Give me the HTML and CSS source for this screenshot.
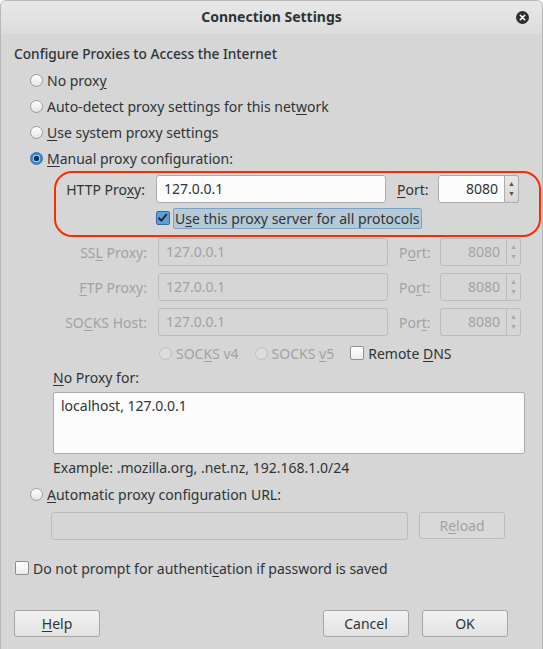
FILE: index.html
```html
<!DOCTYPE html>
<html lang="en">
<head>
    <meta charset="UTF-8">
    <title>Connection Settings</title>
    <link rel="stylesheet" href="styles.css">
</head>
<body>
    <div class="window">
        <div class="titlebar">
            <span class="title">Connection Settings</span>
            <span class="close">
                <svg width="13" height="13" viewBox="0 0 13 13"><circle cx="6.5" cy="6.5" r="6.5" fill="#2e2e2e"/><path d="M4.3 4.3 L8.7 8.7 M8.7 4.3 L4.3 8.7" stroke="#fff" stroke-width="1.6" stroke-linecap="round"/></svg>
            </span>
        </div>

        <div class="content">
            <div class="heading">Configure Proxies to Access the Internet</div>

            <div class="options">
                <div class="option"><span class="radio"></span><span>No prox<u>y</u></span></div>
                <div class="option"><span class="radio"></span><span>Auto-detect proxy settings for this net<u>w</u>ork</span></div>
                <div class="option"><span class="radio"></span><span><u>U</u>se system proxy settings</span></div>
                <div class="option"><span class="radio checked"></span><span><u>M</u>anual proxy configuration:</span></div>
            </div>

            <!-- recuadro rojo alrededor del proxy HTTP -->
            <div class="highlight">
                <div class="proxy-row">
                    <label class="proxy-label">HTTP Pro<u>x</u>y:</label>
                    <div class="field">127.0.0.1</div>
                    <label class="port-label"><u>P</u>ort:</label>
                    <div class="spin">
                        <div class="spin-value">8080</div>
                        <div class="spin-arrows"><span>▲</span><span>▼</span></div>
                    </div>
                </div>
                <div class="share-row">
                    <span class="check checked">
                        <svg width="13" height="13" viewBox="0 0 13 13"><path d="M2.5 6.8 L5.3 9.6 L10.8 3.2" fill="none" stroke="#1d2a36" stroke-width="2"/></svg>
                    </span>
                    <span class="focus-label">U<u>s</u>e this proxy server for all protocols</span>
                </div>
            </div>

            <div class="proxy-rows">
                <div class="proxy-row disabled">
                    <label class="proxy-label">SS<u>L</u> Proxy:</label>
                    <div class="field">127.0.0.1</div>
                    <label class="port-label">P<u>o</u>rt:</label>
                    <div class="spin">
                        <div class="spin-value">8080</div>
                        <div class="spin-arrows"><span>▲</span><span>▼</span></div>
                    </div>
                </div>
                <div class="proxy-row disabled">
                    <label class="proxy-label"><u>F</u>TP Proxy:</label>
                    <div class="field">127.0.0.1</div>
                    <label class="port-label">Po<u>r</u>t:</label>
                    <div class="spin">
                        <div class="spin-value">8080</div>
                        <div class="spin-arrows"><span>▲</span><span>▼</span></div>
                    </div>
                </div>
                <div class="proxy-row disabled">
                    <label class="proxy-label">SO<u>C</u>KS Host:</label>
                    <div class="field">127.0.0.1</div>
                    <label class="port-label">Por<u>t</u>:</label>
                    <div class="spin">
                        <div class="spin-value">8080</div>
                        <div class="spin-arrows"><span>▲</span><span>▼</span></div>
                    </div>
                </div>
                <div class="socks-row">
                    <span class="option disabled"><span class="radio"></span><span>SOC<u>K</u>S v4</span></span>
                    <span class="option disabled"><span class="radio checked-off"></span><span>SOCKS <u>v</u>5</span></span>
                    <span class="option"><span class="check"></span><span>Remote <u>D</u>NS</span></span>
                </div>
            </div>

            <div class="noproxy">
                <div class="noproxy-label"><u>N</u>o Proxy for:</div>
                <div class="textarea">localhost, 127.0.0.1</div>
                <div class="example">Example: .mozilla.org, .net.nz, 192.168.1.0/24</div>
            </div>

            <div class="option auto"><span class="radio"></span><span><u>A</u>utomatic proxy configuration URL:</span></div>
            <div class="url-row">
                <div class="field url-field"></div>
                <div class="button disabled-button">R<u>e</u>load</div>
            </div>

            <div class="option prompt"><span class="check"></span><span>Do not prompt for authenti<u>c</u>ation if password is saved</span></div>

            <div class="buttons">
                <div class="button"><u>H</u>elp</div>
                <div class="spacer"></div>
                <div class="button">Cancel</div>
                <div class="button">OK</div>
            </div>
        </div>
    </div>
</body>
</html>
```

FILE: styles.css
```css
body {
    margin: 0;
    background-color: #ffffff;
    font-family: "Noto Sans", "Open Sans", sans-serif;
    font-size: 14px;
    color: #2e3436;
}
u {
    text-underline-offset: 2px;
}
.window {
    width: 543px;
    height: 649px;
    box-sizing: border-box;
    background-color: #d6d6d6;
    border-radius: 6px 6px 0 0;
    border: 1px solid #b8b8b8;
    border-bottom: none;
    overflow: hidden;
}
.titlebar {
    height: 33px;
    background: linear-gradient(#e8e8e8, #dcdcdc);
    display: flex;
    align-items: center;
    justify-content: center;
    position: relative;
}
.title {
    font-weight: bold;
    margin-top: -2px;
}
.close {
    position: absolute;
    right: 13px;
    top: 8px;
    height: 13px;
}
.content {
    padding: 10px 13px 0 13px;
}
.heading {
    line-height: 20px;
    font-weight: 500;
    font-size: 13.7px;
}
.options {
    margin-top: 3px;
    padding-left: 16px;
}
.option {
    display: flex;
    align-items: center;
    height: 26px;
}
.radio {
    width: 11px;
    height: 11px;
    border: 1px solid #9c9c9c;
    border-radius: 50%;
    background: linear-gradient(#ffffff, #e4e4e4);
    margin-right: 4px;
    flex-shrink: 0;
}
.radio.checked {
    border-color: #2a6fb5;
    background: radial-gradient(circle, #17324e 0 2.5px, #9ec7ee 3px 3.6px, #3d8ad6 4px);
}
.radio.checked-off {
    border-color: #bdbdbd;
    background: radial-gradient(circle, #a8a8a8 0 2.2px, #e6e6e6 2.8px);
}
.check {
    width: 12px;
    height: 12px;
    border: 1px solid #8e8e8e;
    border-radius: 2px;
    background: linear-gradient(#ffffff, #ebebeb);
    margin-right: 4px;
    flex-shrink: 0;
    display: inline-flex;
}
.check.checked {
    background: #5d9ed8;
    border-color: #2f6ea8;
}
.check svg {
    margin: -1px 0 0 -1px;
}
.highlight {
    margin: 0 -12px 0 40px;
    height: 60px;
    border: 2px solid #ff2a00;
    border-radius: 18px;
    padding: 2px 0 0 3px;
}
.proxy-row {
    display: grid;
    grid-template-columns: 86px 230px 30px 81px;
    column-gap: 11px;
    align-items: center;
    height: 28px;
}
.proxy-label {
    text-align: right;
    white-space: nowrap;
}
.field {
    height: 28px;
    box-sizing: border-box;
    border: 1px solid #acacac;
    border-radius: 3px;
    background-color: #fcfcfc;
    padding: 0 7px;
    line-height: 26px;
}
.spin {
    display: flex;
    height: 28px;
}
.spin-value {
    flex: 1;
    box-sizing: border-box;
    border: 1px solid #acacac;
    border-radius: 3px 0 0 3px;
    background-color: #fcfcfc;
    text-align: right;
    padding-right: 6px;
    line-height: 26px;
}
.spin-arrows {
    width: 14px;
    box-sizing: border-box;
    border: 1px solid #acacac;
    border-left: none;
    border-radius: 0 3px 3px 0;
    background: linear-gradient(#e8e8e8, #d8d8d8);
    display: flex;
    flex-direction: column;
    align-items: center;
    justify-content: center;
    font-size: 7px;
    line-height: 10px;
    color: #505050;
}
.share-row {
    display: flex;
    align-items: center;
    height: 22px;
    margin-top: 4px;
    padding-left: 97px;
}
.share-row .check {
    margin-right: 3px;
}
.focus-label {
    background-color: #b5c9d6;
    border: 1px solid #7ba3c4;
    border-radius: 2px;
    padding: 0 1px;
    line-height: 19px;
}
.proxy-rows {
    margin-top: 1px;
    padding-left: 47px;
}
.proxy-rows .proxy-row {
    margin-bottom: 7px;
}
.disabled {
    color: #a2a2a2;
}
.disabled .field,
.disabled .spin-value {
    background-color: #d6d6d6;
    border-color: #bcbcbc;
}
.disabled .spin-arrows {
    background: #d6d6d6;
    border-color: #bcbcbc;
    color: #a8a8a8;
}
.socks-row {
    display: flex;
    align-items: center;
    height: 22px;
    margin-top: -1px;
    padding-left: 98px;
}
.socks-row .option {
    height: 22px;
    margin-right: 16px;
}
.socks-row .disabled .radio {
    border-color: #bdbdbd;
    background: #dcdcdc;
}
.noproxy {
    padding-left: 39px;
}
.noproxy-label {
    margin-top: 4px;
    line-height: 20px;
}
.textarea {
    margin-top: 4px;
    width: 472px;
    height: 62px;
    box-sizing: border-box;
    border: 1px solid #acacac;
    border-radius: 2px;
    background-color: #fcfcfc;
    padding: 3px 7px;
    line-height: 20px;
}
.example {
    margin-top: 5px;
    line-height: 18px;
}
.auto {
    margin-top: 6px;
    height: 22px;
    padding-left: 16px;
}
.url-row {
    display: flex;
    margin-top: 7px;
    padding-left: 37px;
    gap: 11px;
}
.url-field {
    width: 357px;
    background-color: #d6d6d6;
    border-color: #bcbcbc;
}
.button {
    width: 86px;
    height: 27px;
    box-sizing: border-box;
    border: 1px solid #a6a6a6;
    border-radius: 3px;
    background: linear-gradient(#f2f2f2, #e2e2e2);
    text-align: center;
    line-height: 25px;
}
.disabled-button {
    background: #d9d9d9;
    border-color: #bcbcbc;
    color: #a2a2a2;
}
.prompt {
    margin-top: 18px;
    height: 20px;
    padding-left: 1px;
}
.buttons {
    display: flex;
    margin-top: 32px;
    padding-right: 21px;
    gap: 13px;
}
.spacer {
    flex: 1;
}
```
